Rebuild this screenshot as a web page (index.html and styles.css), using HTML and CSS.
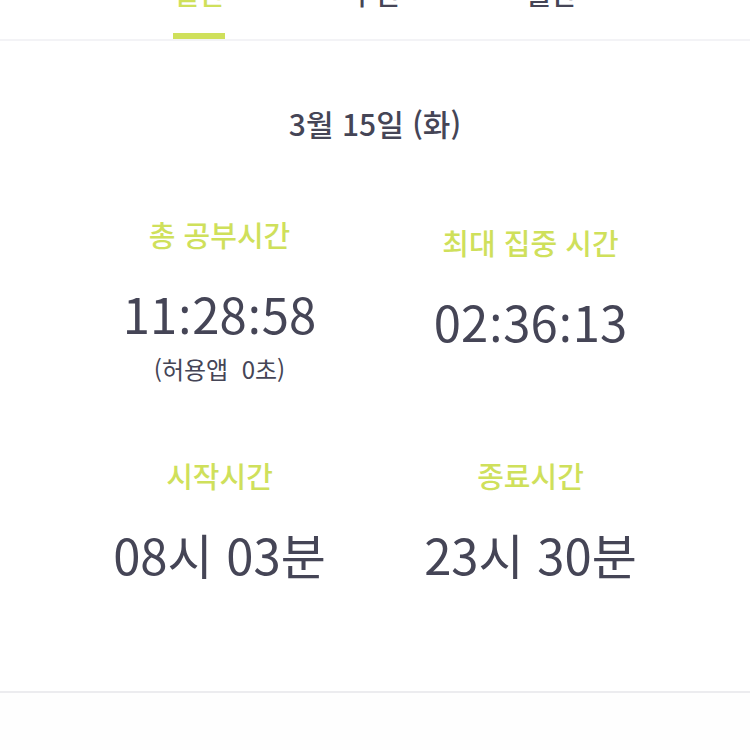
FILE: index.html
```html
<!DOCTYPE html>
<html lang="ko">
<head>
    <meta charset="UTF-8">
    <meta name="viewport" content="width=device-width, initial-scale=1.0">
    <title>공부 기록</title>
    <link rel="stylesheet" href="styles.css">
</head>
<body>
    <nav class="tabs">
        <div class="tab active"><span>일간</span></div>
        <div class="tab"><span>주간</span></div>
        <div class="tab"><span>월간</span></div>
    </nav>

    <section class="daily">
        <h2 class="date">3월 15일 (화)</h2>

        <div class="stats">
            <!-- 총 공부시간 -->
            <div class="stat">
                <div class="stat-label">총 공부시간</div>
                <div class="stat-value">11<span class="colon">:</span>28<span class="colon">:</span>58</div>
                <div class="stat-sub">(허용앱&nbsp; 0초)</div>
            </div>

            <!-- 최대 집중 시간 -->
            <div class="stat stat-offset">
                <div class="stat-label">최대 집중 시간</div>
                <div class="stat-value">02<span class="colon">:</span>36<span class="colon">:</span>13</div>
            </div>

            <div class="stat stat-row2">
                <div class="stat-label">시작시간</div>
                <div class="stat-value">08시 03분</div>
            </div>

            <div class="stat stat-row2">
                <div class="stat-label">종료시간</div>
                <div class="stat-value">23시 30분</div>
            </div>
        </div>
    </section>

    <div class="bottom-area"></div>
</body>
</html>
```

FILE: styles.css
```css
body {
    font-family: "Noto Sans CJK KR", "Noto Sans", sans-serif;
    background-color: #fff;
    color: #454556;
    margin: 0;
    overflow: hidden;
}

.tabs {
    display: flex;
    justify-content: center;
    margin-top: -25px;
    border-bottom: 2px solid #f3f3f6;
}

.tab {
    width: 176px;
    text-align: center;
    font-size: 28px;
    line-height: 36px;
    font-weight: 500;
}

.tab span {
    display: inline-block;
    padding-bottom: 22px;
    border-bottom: 6px solid transparent;
}

.tab.active span {
    color: #cfe05b;
    border-bottom-color: #cfe05b;
}

.daily {
    box-sizing: border-box;
    height: 652px;
    padding-top: 62px;
    border-bottom: 2px solid #ececef;
}

.date {
    margin: 0;
    text-align: center;
    font-size: 30px;
    line-height: 40px;
    font-weight: 500;
}

.stats {
    display: grid;
    grid-template-columns: 311px 311px;
    justify-content: center;
    align-items: start;
    margin-top: 71px;
}

.stat {
    text-align: center;
}

.stat-offset {
    padding-top: 8px;
}

.stat-row2 {
    margin-top: 70px;
}

.stat-label {
    color: #cfe05b;
    font-size: 29px;
    line-height: 40px;
    font-weight: 500;
}

.stat-value {
    margin-top: 29px;
    font-size: 49px;
    line-height: 60px;
}

.colon {
    font-family: "Noto Sans", sans-serif;
    margin: 0 1px;
}

.stat-sub {
    margin-top: 8px;
    font-size: 24px;
    line-height: 32px;
}

.bottom-area {
    background-color: #fefefe;
    height: 100px;
}
```
